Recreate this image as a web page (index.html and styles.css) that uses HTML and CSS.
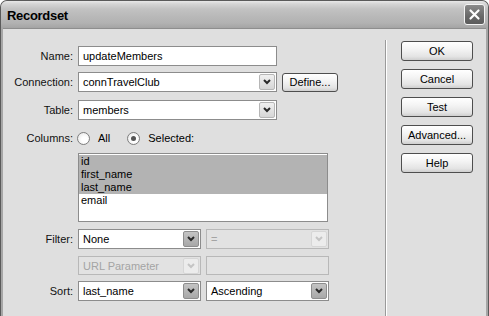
FILE: index.html
```html
<!DOCTYPE html>
<html lang="en">
<head>
<meta charset="utf-8">
<title>Recordset</title>
<link rel="stylesheet" href="styles.css">
</head>
<body>
<div class="window">
  <div class="titlebar">
    <span class="title">Recordset</span>
    <span class="close"><svg width="13" height="13" viewBox="0 0 13 13"><path d="M2.5 2.5 L10.5 10.5 M10.5 2.5 L2.5 10.5" stroke="#fff" stroke-width="2.2" stroke-linecap="round"/></svg></span>
  </div>
  <div class="client">
    <div class="form">
      <div class="row r-name">
        <span class="lbl">Name:</span>
        <div class="field w-wide"><span class="val">updateMembers</span></div>
      </div>
      <div class="row r-conn">
        <span class="lbl">Connection:</span>
        <div class="group">
          <div class="combo w-wide"><span class="val">connTravelClub</span><span class="drop"><svg width="8" height="6" viewBox="0 0 8 6"><polyline points="1,1 4,4 7,1" fill="none" stroke="#2a2a2a" stroke-width="2"/></svg></span></div>
          <span class="btn btn-define">Define...</span>
        </div>
      </div>
      <div class="row r-table">
        <span class="lbl">Table:</span>
        <div class="combo w-wide"><span class="val">members</span><span class="drop"><svg width="8" height="6" viewBox="0 0 8 6"><polyline points="1,1 4,4 7,1" fill="none" stroke="#2a2a2a" stroke-width="2"/></svg></span></div>
      </div>
      <div class="row r-cols">
        <span class="lbl">Columns:</span>
        <div class="radios">
          <span class="radio"></span><span class="rtext">All</span>
          <span class="radio radio-on"></span><span class="rtext">Selected:</span>
        </div>
      </div>
      <div class="row r-list">
        <span class="lbl"></span>
        <ul class="listbox">
          <li class="sel">id</li>
          <li class="sel">first_name</li>
          <li class="sel">last_name</li>
          <li>email</li>
        </ul>
      </div>
      <div class="row r-filter">
        <span class="lbl">Filter:</span>
        <div class="pair">
          <div class="combo"><span class="val">None</span><span class="drop drop-dark"><svg width="8" height="6" viewBox="0 0 8 6"><polyline points="1,1 4,4 7,1" fill="none" stroke="#2a2a2a" stroke-width="2"/></svg></span></div>
          <div class="combo disabled"><span class="val">=</span><span class="drop drop-off"><svg width="8" height="6" viewBox="0 0 8 6"><polyline points="1,1 4,4 7,1" fill="none" stroke="#c4c4c4" stroke-width="2"/></svg></span></div>
        </div>
      </div>
      <div class="row r-url">
        <span class="lbl"></span>
        <div class="pair">
          <div class="combo disabled"><span class="val">URL Parameter</span><span class="drop drop-off"><svg width="8" height="6" viewBox="0 0 8 6"><polyline points="1,1 4,4 7,1" fill="none" stroke="#c4c4c4" stroke-width="2"/></svg></span></div>
          <div class="field disabled"></div>
        </div>
      </div>
      <div class="row r-sort">
        <span class="lbl">Sort:</span>
        <div class="pair">
          <div class="combo"><span class="val">last_name</span><span class="drop drop-dark"><svg width="8" height="6" viewBox="0 0 8 6"><polyline points="1,1 4,4 7,1" fill="none" stroke="#2a2a2a" stroke-width="2"/></svg></span></div>
          <div class="combo"><span class="val">Ascending</span><span class="drop drop-dark"><svg width="8" height="6" viewBox="0 0 8 6"><polyline points="1,1 4,4 7,1" fill="none" stroke="#2a2a2a" stroke-width="2"/></svg></span></div>
        </div>
      </div>
    </div>
    <div class="side">
      <span class="btn">OK</span>
      <span class="btn">Cancel</span>
      <span class="btn">Test</span>
      <span class="btn">Advanced...</span>
      <span class="btn">Help</span>
    </div>
  </div>
</div>
</body>
</html>
```

FILE: styles.css
```css
html, body {
  margin: 0;
  padding: 0;
  overflow: hidden;
  background: #ffffff;
}

body {
  font-family: "Liberation Sans", Arial, sans-serif;
  font-size: 11px;
  color: #000;
}

.window {
  width: 489px;
  height: 316px;
  box-sizing: border-box;
  display: flex;
  flex-direction: column;
  background: #a6a6a6;
  border-radius: 7px 7px 0 0;
  border: 1px solid #5a5a5a;
  border-bottom: 0;
}

.titlebar {
  height: 27px;
  flex: 0 0 27px;
  display: flex;
  align-items: center;
  justify-content: space-between;
  padding: 0 3px 0 6px;
  border-radius: 6px 6px 0 0;
  background: linear-gradient(to bottom, #e8e8e8 0, #d4d4d4 3px, #c2c2c2 8px, #b8b8b8 16px, #b2b2b2 22px, #a4a4a4 27px);
}

.title {
  font-weight: bold;
  font-size: 13px;
  letter-spacing: -0.3px;
  color: #000;
  padding-top: 1px;
}

.close {
  width: 21px;
  height: 21px;
  box-sizing: border-box;
  border: 1px solid #f4f4f4;
  border-radius: 3px;
  background: linear-gradient(to bottom, #8a8a8a, #686868 60%, #5c5c5c);
  display: flex;
  align-items: center;
  justify-content: center;
  margin-top: 0;
}

.client {
  flex: 1;
  display: flex;
  margin: 0 2px;
  background: #dfdfdf;
  border-top: 1px solid #8e8e8e;
}

.form {
  flex: 0 0 382px;
  display: flex;
  flex-direction: column;
  padding-top: 17px;
}

.row {
  display: grid;
  grid-template-columns: 70px auto;
  column-gap: 5px;
  align-items: center;
}

.lbl {
  text-align: right;
  color: #111;
}

.r-conn { margin-top: 6px; }
.r-table { margin-top: 8px; }
.r-cols { margin-top: 11px; height: 14px; }
.r-list { margin-top: 8px; }
.r-filter { margin-top: 7px; }
.r-url { margin-top: 7px; }
.r-sort { margin-top: 6px; }

.group {
  display: flex;
  align-items: center;
  gap: 5px;
}

.pair {
  display: flex;
  gap: 5px;
}

.field, .combo {
  height: 20px;
  box-sizing: border-box;
  border: 1px solid #8c8c8c;
  background: #fff;
  display: flex;
  align-items: center;
  position: relative;
}

.w-wide { width: 199px; }
.pair .combo, .pair .field { width: 123px; }
.r-url .combo, .r-url .field { height: 19px; }

.val {
  flex: 1;
  padding-left: 4px;
  white-space: nowrap;
  overflow: hidden;
}

.drop {
  width: 16px;
  height: 16px;
  margin-right: 1px;
  box-sizing: border-box;
  border: 1px solid #b6b6b6;
  border-radius: 2px;
  background: linear-gradient(to bottom, #f0f0f0, #d6d6d6);
  display: flex;
  align-items: center;
  justify-content: center;
}

.drop-dark {
  border-color: #8e8e8e;
  background: linear-gradient(to bottom, #c4c4c4, #a8a8a8);
}

.drop-off {
  border-color: #d6d6d6;
  background: #ececec;
}

.disabled {
  border-color: #b8b8b8;
  background: #e2e2e2;
  color: #a4a4a4;
}

.btn {
  box-sizing: border-box;
  width: 72px;
  height: 20px;
  border: 1px solid #4e4e4e;
  border-radius: 3px;
  background: linear-gradient(to bottom, #ffffff 0, #f4f4f4 40%, #e4e4e4 80%, #cfcfcf 100%);
  display: flex;
  align-items: center;
  justify-content: center;
  color: #000;
}

.btn-define {
  width: 56px;
  height: 19px;
}

.radios {
  display: flex;
  align-items: center;
  margin-left: -1px;
}

.radio {
  width: 13px;
  height: 13px;
  box-sizing: border-box;
  border: 1px solid #7e7e7e;
  border-radius: 50%;
  background: radial-gradient(circle at 60% 60%, #ffffff 30%, #e2e2e2 100%);
  display: flex;
  align-items: center;
  justify-content: center;
}

.radio-on::after {
  content: "";
  width: 5px;
  height: 5px;
  border-radius: 50%;
  background: #555;
}

.rtext {
  margin-left: 8px;
  margin-right: 17px;
}

.listbox {
  list-style: none;
  margin: 0;
  padding: 1px 0 0 0;
  width: 250px;
  height: 69px;
  box-sizing: border-box;
  border: 1px solid #8c8c8c;
  background: #fff;
}

.listbox li {
  height: 13px;
  line-height: 13px;
  padding-left: 2px;
}

.listbox li.sel {
  background: #b3b3b3;
}

.side {
  flex: 1;
  margin-top: 11px;
  border-left: 1px solid #9a9a9a;
  box-shadow: inset 1px 0 0 #ffffff;
  padding: 1px 0 0 15px;
  display: flex;
  flex-direction: column;
  gap: 8px;
}
```
